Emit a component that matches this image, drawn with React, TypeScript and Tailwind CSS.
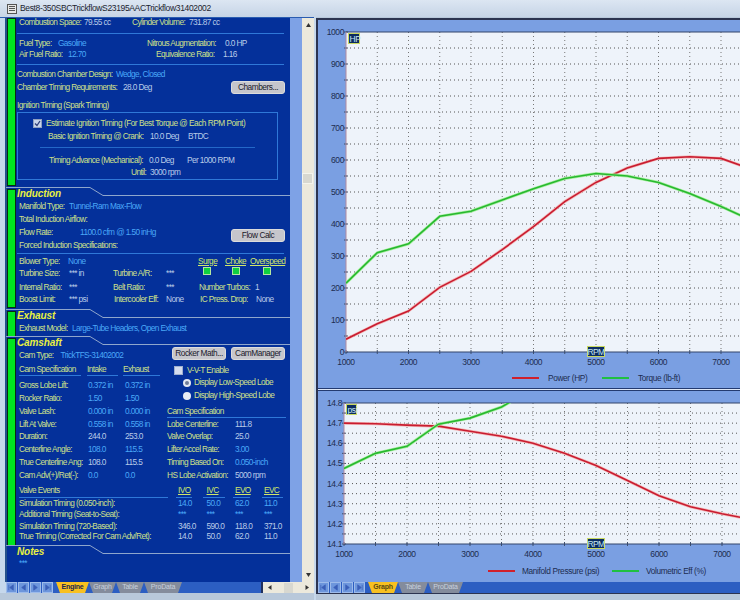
import React from "react";

const F = { fontFamily: '"Liberation Sans", Arial, sans-serif' };

function Line({ top, left = 17, right = 284, cls = "bg-[#2f78d8]" }: { top: number; left?: number; right?: number; cls?: string }) {
  return <div className={`h-px ${cls}`} style={{ marginTop: top, marginLeft: left, width: right - left }} />;
}

type Cell = [number, string, ("l" | "v" | "w" | "u")?];

function Row({ h, x0 = 0, cells }: { h: number; x0?: number; cells: Cell[] }) {
  return (
    <div className="flex items-center whitespace-nowrap" style={{ height: h, paddingLeft: x0 }}>
      {cells.map(([w, t, k], i) => (
        <div
          key={i}
          className={
            k === "v"
              ? "text-[#4aa8f8] shrink-0"
              : k === "w"
              ? "text-[#b9cbe8] shrink-0"
              : k === "u"
              ? "text-[#cfe66a] underline shrink-0"
              : "text-[#cfe08a] shrink-0"
          }
          style={{ width: w }}
        >
          {t}
        </div>
      ))}
    </div>
  );
}

function Btn({ children, w, ml = 0, mt = 0 }: { children: React.ReactNode; w: number; ml?: number; mt?: number }) {
  return (
    <div
      className="h-[13px] rounded-[3px] bg-[#c6c6cc] border border-[#dcdcdc] text-[#1a1a2a] flex items-center justify-center shrink-0 whitespace-nowrap text-[8.3px] tracking-[-0.45px]"
      style={{ width: w, marginLeft: ml, marginTop: mt }}
    >
      {children}
    </div>
  );
}

function SectionHead({ title }: { title: string }) {
  return (
    <div className="relative h-[14px]">
      <svg width="284" height="10" className="absolute left-[6px] top-0">
        <path d="M0 0.5 H84 L97 8.5 H284" fill="none" stroke="#8fa6cc" strokeWidth="1" />
      </svg>
      <div className="absolute left-[17px] top-[-1px] text-[#e8f040] italic font-bold text-[10px] tracking-[-0.1px] leading-[16px]">{title}</div>
    </div>
  );
}

function Green({ h, top }: { h: number; top: number }) {
  return <div className="absolute left-[7px] w-[9px] bg-[#00e620] border border-[#0a2a10]" style={{ height: h, top }} />;
}

function Sq({ ml }: { ml: number }) {
  return <div className="w-[8px] h-[8px] bg-[#10d040] border border-[#b4e8a0]" style={{ marginLeft: ml }} />;
}

function Engine() {
  return (
    <div className="relative w-[290px] h-[564px] overflow-hidden bg-[linear-gradient(to_right,#c6d8ec_5px,#24508c_5px,#24508c_7px,#04309a_7px)] text-[8.3px] tracking-[-0.6px] leading-none">
      <Green top={0} h={168} />
      <Green top={171} h={119} />
      <Green top={293} h={26} />
      <Green top={320} h={208} />
      <Row h={9} x0={19} cells={[[65, "Combustion Space:"], [48, "79.55 cc", "w"], [57, "Cylinder Volume:"], [40, "731.87 cc", "w"]]} />
      <Line top={6} />
      <div className="h-[4px]" />
      <Row h={11} x0={19} cells={[[39, "Fuel Type:"], [89, "Gasoline", "v"], [78, "Nitrous Augmentation:"], [40, "0.0 HP", "w"]]} />
      <Row h={11} x0={19} cells={[[49, "Air Fuel Ratio:"], [88, "12.70", "v"], [67, "Equivalence Ratio:"], [40, "1.16", "w"]]} />
      <Line top={4} />
      <div className="h-[3px]" />
      <Row h={12} x0={17} cells={[[99, "Combustion Chamber Design:"], [90, "Wedge, Closed", "v"]]} />
      <div className="flex items-center h-[14px]">
        <Row h={14} x0={17} cells={[[106, "Chamber Timing Requirements:"], [108, "28.0 Deg", "w"]]} />
        <Btn w={54}>Chambers...</Btn>
      </div>
      <div className="pl-[17px] mt-[6px] text-[#cfe08a] h-[10px] flex items-center">Ignition Timing (Spark Timing)</div>
      <div className="ml-[17px] mt-[2px] w-[261px] h-[68px] border border-[#2f78d8]">
        <div className="flex items-center h-[11px] mt-[5px] pl-[15px]">
          <div className="w-[9px] h-[9px] bg-[#c8d4ea] border border-[#8fa0c0] flex items-center justify-center">
            <svg width="7" height="7" viewBox="0 0 7 7"><path d="M1 3.5 L3 5.5 L6 1" fill="none" stroke="#2f3f78" strokeWidth="1.3" /></svg>
          </div>
          <div className="ml-[4px] text-[#cfe08a] whitespace-nowrap tracking-[-0.5px]">Estimate Ignition Timing (For Best Torque @ Each RPM Point)</div>
        </div>
        <Row h={14} x0={30} cells={[[102, "Basic Ignition Timing @ Crank:"], [38, "10.0 Deg", "w"], [30, "BTDC", "w"]]} />
        <Line top={4} left={22} right={237} cls="bg-[#2468c8]" />
        <div className="h-[7px]" />
        <Row h={11} x0={31} cells={[[100, "Timing Advance (Mechanical):"], [38, "0.0 Deg", "w"], [50, "Per 1000 RPM", "w"]]} />
        <Row h={13} x0={113} cells={[[19, "Until:"], [30, "3000 rpm", "w"]]} />
      </div>
      <div className="h-[7px]" />
      <SectionHead title="Induction" />
      <Row h={10} x0={19} cells={[[50, "Manifold Type:"], [120, "Tunnel-Ram Max-Flow", "v"]]} />
      <div className="flex items-start h-[27px]">
        <div className="w-[231px]">
          <Row h={16} x0={19} cells={[[120, "Total Induction Airflow:"]]} />
          <Row h={11} x0={19} cells={[[61, "Flow Rate:"], [100, "1100.0 cfm @ 1.50 inHg", "v"]]} />
        </div>
        <Btn w={54} mt={18}>Flow Calc</Btn>
      </div>
      <Row h={15} x0={19} cells={[[120, "Forced Induction Specifications:"]]} />
      <Line top={0} />
      <div className="h-[1px]" />
      <Row h={12} x0={19} cells={[[49, "Blower Type:"], [130, "None", "v"], [27, "Surge", "u"], [25, "Choke", "u"], [38, "Overspeed", "u"]]} />
      <div className="flex items-start h-[14px]">
        <Row h={12} x0={19} cells={[[50, "Turbine Size:"], [44, "*** in", "w"], [53, "Turbine A/R:"], [37, "***", "w"]]} />
        <Sq ml={0} /><Sq ml={21} /><Sq ml={23} />
      </div>
      <Row h={12} x0={19} cells={[[50, "Internal Ratio:"], [44, "***", "w"], [53, "Belt Ratio:"], [33, "***", "w"], [56, "Number Turbos:"], [10, "1", "w"]]} />
      <Row h={12} x0={19} cells={[[50, "Boost Limit:"], [45, "*** psi", "w"], [52, "Intercooler Eff:"], [34, "None", "w"], [56, "IC Press. Drop:"], [20, "None", "w"]]} />
      <div className="h-[4px]" />
      <SectionHead title="Exhaust" />
      <Row h={10} x0={19} cells={[[53, "Exhaust Model:"], [180, "Large-Tube Headers, Open Exhaust", "v"]]} />
      <div className="h-[3px]" />
      <SectionHead title="Camshaft" />
      <div className="flex items-start h-[11px]">
        <Row h={11} x0={19} cells={[[41.5, "Cam Type:"], [111.5, "TrickTFS-31402002", "v"]]} />
        <Btn w={54} mt={-3}>Rocker Math...</Btn>
        <Btn w={54} ml={5} mt={-3}>CamManager</Btn>
      </div>
      <div className="flex mt-[3px]">
        <div className="w-[165px] shrink-0">
          <Row h={11} x0={19} cells={[[68, "Cam Specification"], [36, "Intake"], [37, "Exhaust"]]} />
          <div className="flex ml-[19px] h-px">
            <div className="w-[62px] bg-[#2f78d8]" /><div className="w-[31px] ml-[6px] bg-[#2f78d8]" /><div className="w-[37px] ml-[5px] bg-[#2f78d8]" />
          </div>
          <div className="h-[3px]" />
          <Row h={13} x0={19} cells={[[69, "Gross Lobe Lift:"], [37, "0.372 in", "v"], [37, "0.372 in", "v"]]} />
          <Row h={13} x0={19} cells={[[69, "Rocker Ratio:"], [37, "1.50", "v"], [37, "1.50", "v"]]} />
          <Row h={13} x0={19} cells={[[69, "Valve Lash:"], [37, "0.000 in", "v"], [37, "0.000 in", "v"]]} />
          <Row h={12} x0={19} cells={[[69, "Lift At Valve:"], [37, "0.558 in", "v"], [37, "0.558 in", "v"]]} />
          <Row h={13} x0={19} cells={[[69, "Duration:"], [37, "244.0", "w"], [37, "253.0", "w"]]} />
          <Row h={13} x0={19} cells={[[69, "Centerline Angle:"], [37, "108.0", "v"], [37, "115.5", "v"]]} />
          <Row h={13} x0={19} cells={[[69, "True Centerline Ang:"], [37, "108.0", "w"], [37, "115.5", "w"]]} />
          <Row h={13} x0={19} cells={[[69, "Cam Adv(+)/Ret(-):"], [37, "0.0", "v"], [37, "0.0", "v"]]} />
        </div>
        <div className="flex-1 pl-[2px]">
          <div className="flex items-center h-[12px] pl-[7px]">
            <div className="w-[9px] h-[9px] bg-[#d4dcee] border border-[#9fb0d0]" />
            <div className="ml-[4px] text-[#cfe08a] whitespace-nowrap">V-V-T Enable</div>
          </div>
          <div className="flex items-center h-[13px] pl-[16px]">
            <div className="w-[8px] h-[8px] rounded-full bg-[#e4e8f2] flex items-center justify-center"><div className="w-[4px] h-[4px] bg-[#707c98] rounded-full" /></div>
            <div className="ml-[3px] text-[#cfe08a] whitespace-nowrap">Display Low-Speed Lobe</div>
          </div>
          <div className="flex items-center h-[13px] pl-[16px]">
            <div className="w-[8px] h-[8px] rounded-full bg-[#e8ecf4]" />
            <div className="ml-[3px] text-[#cfe08a] whitespace-nowrap">Display High-Speed Lobe</div>
          </div>
          <div className="h-[4px]" />
          <Row h={11} cells={[[100, "Cam Specification"]]} />
          <Line top={0} left={0} right={119} />
          <Row h={12} cells={[[68, "Lobe Centerline:"], [40, "111.8", "w"]]} />
          <Row h={13} cells={[[68, "Valve Overlap:"], [40, "25.0", "w"]]} />
          <Row h={13} cells={[[68, "Lifter Accel Rate:"], [40, "3.00", "v"]]} />
          <Row h={13} cells={[[68, "Timing Based On:"], [60, "0.050-inch", "v"]]} />
          <Row h={13} cells={[[68, "HS Lobe Activation:"], [60, "5000 rpm", "w"]]} />
        </div>
      </div>
      <div className="h-[3px]" />
      <Row h={11} x0={19} cells={[[159, "Valve Events"], [28.5, "IVO", "u"], [28.5, "IVC", "u"], [29, "EVO", "u"], [20, "EVC", "u"]]} />
      <div className="flex ml-[19px] h-px mt-[1px]">
        <div className="w-[149px] bg-[#2f78d8]" /><div className="w-[16px] ml-[8px] bg-[#2f78d8]" /><div className="w-[22px] ml-[11px] bg-[#2f78d8]" /><div className="w-[17px] ml-[8px] bg-[#2f78d8]" /><div className="w-[21px] ml-[12px] bg-[#2f78d8]" />
      </div>
      <Row h={11} x0={19} cells={[[159, "Simulation Timing (0.050-inch):"], [28.5, "14.0", "v"], [28.5, "50.0", "v"], [29, "62.0", "v"], [20, "11.0", "v"]]} />
      <Row h={11} x0={19} cells={[[159, "Additional Timing (Seat-to-Seat):"], [28.5, "***", "v"], [28.5, "***", "v"], [29, "***", "v"], [20, "***", "v"]]} />
      <Row h={12} x0={19} cells={[[159, "Simulation Timing (720-Based):"], [28.5, "346.0", "w"], [28.5, "590.0", "w"], [29, "118.0", "w"], [20, "371.0", "w"]]} />
      <Row h={8} x0={19} cells={[[159, "True Timing (Corrected For Cam Adv/Ret):"], [28.5, "14.0", "w"], [28.5, "50.0", "w"], [29, "62.0", "w"], [20, "11.0", "w"]]} />
      <div className="h-[5px]" />
      <SectionHead title="Notes" />
      <div className="pl-[19px] text-[#4aa8f8] h-[8px] flex items-center">***</div>
    </div>
  );
}

const NAV = ["M7 2 L3 5 L7 8 Z M2 2 V8", "M7 2 L3 5 L7 8 Z", "M3 2 L7 5 L3 8 Z", "M3 2 L7 5 L3 8 Z M8 2 V8"];

function Tabs({ tabs, active }: { tabs: [string, number][]; active: string }) {
  return (
    <div className="flex items-center h-[11px] bg-[#2c5ec2] text-[7px] tracking-[-0.2px]">
      <div className="flex gap-px h-full items-stretch">
        {NAV.map((d) => (
          <div key={d} className="w-[11px] bg-[#6d96dc] border border-[#9dbbea] flex items-center justify-center">
            <svg width="9" height="9" viewBox="0 0 10 10"><path d={d} fill="#3a5fb8" stroke="#3a5fb8" strokeWidth="0.8" /></svg>
          </div>
        ))}
      </div>
      <div className="flex h-full ml-[3px]">
        {tabs.map(([t, w], i) => (
          <div
            key={t}
            style={{ width: w }}
            className={
              i === 0
                ? "h-full bg-[#f8c020] flex items-center justify-center [clip-path:polygon(0_0,100%_0,calc(100%-4px)_100%,4px_100%)]"
                : "h-full bg-[#848c9c] text-[#c8d0dc] flex items-center justify-center [clip-path:polygon(0_0,100%_0,calc(100%-4px)_100%,4px_100%)]"
            }
          >
            <span className={i === 0 ? `font-bold ${active}` : ""}>{t}</span>
          </div>
        ))}
      </div>
    </div>
  );
}

type Pt = [number, number];

function Chart(props: {
  h: number;
  plotL: number;
  plotT: number;
  plotB: number;
  xStep: number;
  yLabels: string[];
  unit: string;
  unitW: number;
  series: { color: string; halo: string; pts: Pt[] }[];
  hgrid: number;
}) {
  const { h, plotL, plotT, plotB, xStep, yLabels, unit, unitW, series, hgrid } = props;
  const w = 422;
  const plotH = plotB - plotT;
  const ys = Array.from({ length: hgrid + 1 }, (_, i) => plotT + (plotH * i) / hgrid);
  const xs = Array.from({ length: 13 }, (_, i) => plotL + (xStep / 2) * i);
  return (
    <svg width={w} height={h} className="block shrink-0" fontFamily='"Liberation Sans", Arial, sans-serif'>
      <rect x={plotL} y={plotT} width={w - plotL} height={plotH} fill="#eef3fa" />
      <clipPath id={`c${unit}`}><rect x={plotL} y={plotT} width={w - plotL} height={plotH} /></clipPath>
      {ys.map((y, i) => (
        <g key={i}>
          {i > 0 && i < hgrid && <line x1={plotL} x2={w} y1={y} y2={y} stroke="#555" strokeWidth="1" strokeDasharray="1 3" />}
          <line x1={plotL - 2} x2={plotL + 2} y1={y} y2={y} stroke="#40506c" />
        </g>
      ))}
      {xs.map((x, i) => (
        <g key={i}>
          {i > 0 && <line x1={x} x2={x} y1={plotT} y2={plotB} stroke="#777" strokeWidth="1" strokeDasharray="1 3" />}
          <line x1={x} x2={x} y1={plotB - 2} y2={plotB + 2} stroke="#40506c" />
        </g>
      ))}
      <line x1={plotL} x2={w} y1={plotT} y2={plotT} stroke="#33446a" />
      <line x1={plotL} x2={w} y1={plotB} y2={plotB} stroke="#33446a" />
      <line x1={plotL} x2={plotL} y1={plotT} y2={plotB} stroke="#b08aa0" />
      <g clipPath={`url(#c${unit})`}>
        {series.map((s, i) => (
          <g key={i}>
            <polyline points={s.pts.map((p) => p.join(",")).join(" ")} fill="none" stroke={s.halo} strokeWidth="3" />
            <polyline points={s.pts.map((p) => p.join(",")).join(" ")} fill="none" stroke={s.color} strokeWidth="1.6" />
          </g>
        ))}
      </g>
      {yLabels.map((t, i) => (
        <text key={t} x={plotL - 2} y={ys[i * (hgrid / (yLabels.length - 1))] + 3} textAnchor="end" fontSize="8.5" fill="#1c2c50" letterSpacing="-0.4">{t}</text>
      ))}
      {[1000, 2000, 3000, 4000, 5000, 6000, 7000].map((r, i) => (
        <text key={r} x={plotL + xStep * i} y={plotB + 13} textAnchor="middle" fontSize="8.5" fill="#1c2c50" letterSpacing="-0.4">{r}</text>
      ))}
      <rect x={plotL + 2.5} y={plotT + 1.5} width={unitW} height="10" fill="#0c2c60" stroke="#c8d860" />
      <text x={plotL + 3.5} y={plotT + 9.5} fontSize="8.5" letterSpacing="-0.4" fill="#c8e8f0">{unit}</text>
      <rect x={plotL + xStep * 4 - 8.5} y={plotB - 5.5} width="17" height="10" fill="#0c2c60" stroke="#c8d860" />
      <text x={plotL + xStep * 4} y={plotB + 2.5} textAnchor="middle" fontSize="8.5" letterSpacing="-0.6" fill="#c8e8f0">RPM</text>
    </svg>
  );
}

function Legend({ a, b, ml, gap, lw }: { a: string; b: string; ml: number; gap: number; lw: number }) {
  return (
    <div className="flex items-center text-[8.3px] tracking-[-0.35px] text-[#1c2c50] whitespace-nowrap h-[12px] shrink-0" style={{ paddingLeft: ml }}>
      <div className="h-[2px] bg-[#d0202c]" style={{ width: lw }} />
      <div style={{ marginLeft: gap, width: a.length > 12 ? 90 : 54 }}>{a}</div>
      <div className="h-[2px] bg-[#20c040]" style={{ width: lw }} />
      <div style={{ marginLeft: gap }}>{b}</div>
    </div>
  );
}

const rp = [1000, 1500, 2000, 2500, 3000, 3500, 4000, 4500, 5000, 5500, 6000, 6500, 7000, 7500];
const power = [40, 88, 128, 202, 252, 320, 392, 470, 530, 575, 605, 610, 605, 570];
const torque = [215, 310, 338, 424, 440, 475, 510, 542, 558, 550, 530, 495, 455, 410];
const mani = [14.7, 14.697, 14.69, 14.685, 14.66, 14.635, 14.6, 14.55, 14.49, 14.415, 14.34, 14.285, 14.25, 14.22];
const ve = [14.475, 14.55, 14.585, 14.695, 14.725, 14.78, 14.87, 14.95, 15];
const tx = (r: number) => 28 + ((r - 1000) / 1000) * 62.5;
const ty = (v: number) => 12 + (1000 - v) * 0.32;
const bx = (r: number) => 26 + ((r - 1000) / 1000) * 63;
const by = (v: number) => 12 + (14.8 - v) * 201.4;
const RED = { color: "#c81c30", halo: "#f4b8b8" };
const GRN = { color: "#28b830", halo: "#a8f0a0" };

export default function App() {
  return (
    <div className="w-[740px] h-[600px] overflow-hidden bg-[#b8c8da] flex flex-col" style={F}>
      <div className="h-[17px] flex items-center bg-gradient-to-b from-[#dce6f2] to-[#c6d4e6] shrink-0 text-[8.5px] tracking-[-0.35px] text-[#1c2430]">
        <div className="ml-[7px] w-[10px] h-[10px] bg-[#e8e8e8] border border-[#555] flex flex-col justify-center gap-px px-px">
          <div className="h-px bg-[#555]" /><div className="h-px bg-[#555]" /><div className="h-px bg-[#555]" />
        </div>
        <div className="ml-[3px]">Best8-350SBCTrickflowS23195AACTrickflow31402002</div>
      </div>
      <div className="flex flex-1">
        <div className="w-[314px] shrink-0 h-[577px] border-t border-[#2a5cb0]">
          <div className="flex h-[564px]">
            <Engine />
            <div className="w-[12px] bg-[#7ea2e6]" />
            <div className="w-[12px] bg-[#ece9dc] flex flex-col justify-between items-center relative">
              <svg width="7" height="8" viewBox="0 0 7 8" className="mt-[3px]"><path d="M3.5 2 L6 6 H1 Z" fill="#333" /></svg>
              <div className="absolute top-[155px] left-0 w-[11px] h-[11px] bg-[#d8d8d0] border border-[#f4f4ec]" />
              <svg width="7" height="8" viewBox="0 0 7 8" className="mb-[3px]"><path d="M1 2 H6 L3.5 6 Z" fill="#333" /></svg>
            </div>
          </div>
          <div className="flex h-[11px]">
            <div className="w-[6px] bg-[#c6d8ec]" />
            <div className="w-[255px]"><Tabs tabs={[["Engine", 33], ["Graph", 27], ["Table", 28], ["ProData", 38]]} active="text-[#1a2450]" /></div>
            <div className="w-[2px] bg-[#20305c]" />
            <div className="flex-1 bg-[#ece9dc] flex justify-between items-center px-[4px]">
              <svg width="6" height="7" viewBox="0 0 6 7"><path d="M4.5 1 L1 3.5 L4.5 6 Z" fill="#333" /></svg>
              <div className="w-[9px] h-[10px] bg-[#d8d8d0]" />
              <svg width="6" height="7" viewBox="0 0 6 7"><path d="M1.5 1 L5 3.5 L1.5 6 Z" fill="#333" /></svg>
            </div>
          </div>
        </div>
        <div className="w-[2px] shrink-0 bg-[#c6d8ec]" />
        <div className="flex-1 h-[576px] mt-px bg-[#7a9fe2] border-l-2 border-t-2 border-b border-[#2c3450] flex flex-col overflow-hidden">
          <Chart h={352} plotL={28} plotT={12} plotB={332} xStep={62.5} yLabels={["1000", "900", "800", "700", "600", "500", "400", "300", "200", "100", "0"]} unit="HP" unitW={11} hgrid={20}
            series={[
              { ...RED, pts: rp.map((r, i) => [tx(r), ty(power[i])]) },
              { ...GRN, pts: rp.map((r, i) => [tx(r), ty(torque[i])]) },
            ]}
          />
          <Legend a="Power (HP)" b="Torque (lb-ft)" ml={194} gap={9} lw={27} />
          <div className="h-[4px] shrink-0" />
          <div className="h-[3px] shrink-0 bg-[#dfe8f6] border-y border-[#233a70]" />
          <Chart h={170} plotL={26} plotT={12} plotB={153} xStep={63} yLabels={["14.8", "14.7", "14.6", "14.5", "14.4", "14.3", "14.2", "14.1"]} unit="psi" unitW={10} hgrid={14}
            series={[
              { ...RED, pts: rp.map((r, i) => [bx(r), by(mani[i])]) },
              { ...GRN, pts: ve.map((v, i) => [bx(rp[i]), by(v)]) },
            ]}
          />
          <div className="h-[4px] shrink-0" />
          <Legend a="Manifold Pressure (psi)" b="Volumetric Eff (%)" ml={170} gap={7} lw={27} />
          <div className="mt-auto">
            <Tabs tabs={[["Graph", 30], ["Table", 30], ["ProData", 35]]} active="text-[#5a4a10]" />
          </div>
        </div>
      </div>
    </div>
  );
}
